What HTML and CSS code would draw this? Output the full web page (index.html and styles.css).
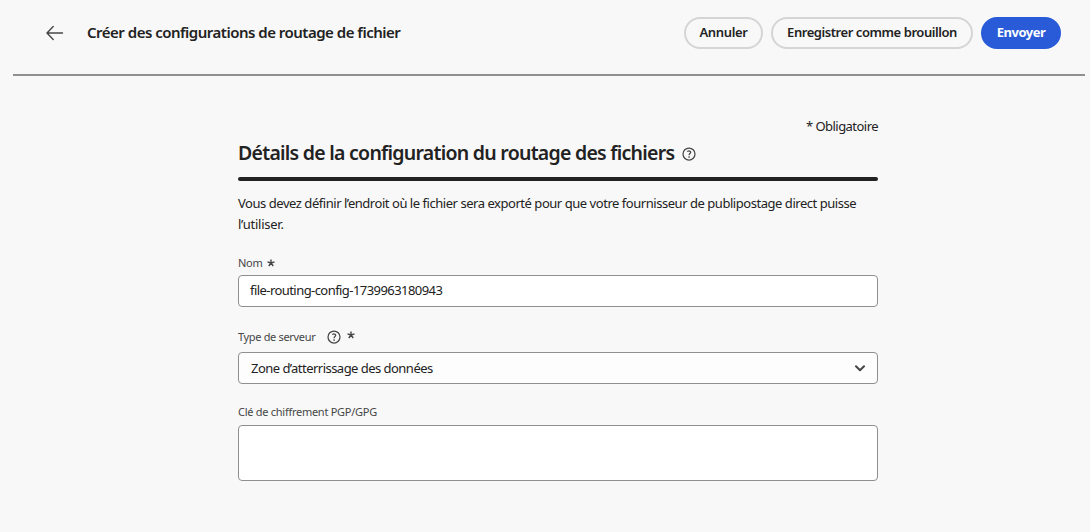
FILE: index.html
```html
<!DOCTYPE html>
<html lang="fr">
<head>
<meta charset="utf-8">
<title>Créer des configurations de routage de fichier</title>
<link rel="stylesheet" href="styles.css">
</head>
<body>
<header class="topbar">
  <svg class="back" width="18" height="16" viewBox="0 0 18 16"><path d="M16.5 8H1M7.2 1.5L1 8L7.2 14.5" /></svg>
  <h1 class="title"><span>Créer des configurations de routage de fichier</span></h1>
  <div class="actions">
    <button class="btn btn-cancel"><span>Annuler</span></button>
    <button class="btn btn-draft"><span>Enregistrer comme brouillon</span></button>
    <button class="btn btn-send"><span>Envoyer</span></button>
  </div>
</header>
<main class="form">
  <div class="required"><span>* Obligatoire</span></div>
  <div class="heading">
    <h2><span>Détails de la configuration du routage des fichiers</span></h2>
    <svg class="help" width="14" height="14" viewBox="0 0 14 14"><circle cx="7" cy="7" r="6"/><path d="M5.3 4.6C6.3 3.7 8.7 3.7 8.7 5.3C8.7 6.5 7.1 6.7 7.1 8.2"/><circle class="dot" cx="7.1" cy="10" r=".85"/></svg>
  </div>
  <div class="rule"></div>
  <p class="intro"><span>Vous devez définir l’endroit où le fichier sera exporté pour que votre fournisseur de publipostage direct puisse</span><br><span class="intro-end">l’utiliser.</span></p>
  <div class="label label-name"><span>Nom</span>
    <svg class="star" width="8" height="8" viewBox="0 0 8 8"><path d="M4 4V.4M4 4L7.5 2.9M4 4L6.2 7M4 4L1.8 7M4 4L.5 2.9"/></svg>
  </div>
  <div class="field field-name"><span>file-routing-config-1739963180943</span></div>
  <div class="label label-type"><span>Type de serveur</span>
    <svg class="help" width="14" height="14" viewBox="0 0 14 14"><circle cx="7" cy="7" r="6"/><path d="M5.3 4.6C6.3 3.7 8.7 3.7 8.7 5.3C8.7 6.5 7.1 6.7 7.1 8.2"/><circle class="dot" cx="7.1" cy="10" r=".85"/></svg>
    <svg class="star" width="8" height="8" viewBox="0 0 8 8"><path d="M4 4V.4M4 4L7.5 2.9M4 4L6.2 7M4 4L1.8 7M4 4L.5 2.9"/></svg>
  </div>
  <div class="field field-type"><span>Zone d’atterrissage des données</span>
    <svg class="chevron" width="10" height="7" viewBox="0 0 10 7"><path d="M1 1.2L5 5.2L9 1.2"/></svg>
  </div>
  <div class="label label-key"><span>Clé de chiffrement PGP/GPG</span></div>
  <div class="field field-key"></div>
</main>
</body>
</html>
```
FILE: styles.css
```css
* { box-sizing: border-box; }
body { margin: 0; height: 532px; overflow: hidden; background: #f8f8f8; color: #222; font-family: "Noto Sans", sans-serif; font-size: 13px; }
h1, h2, p { margin: 0; white-space: nowrap; }
svg { flex: none; fill: none; stroke: #464646; }
.topbar { display: flex; align-items: center; height: 76px; margin: 0 5px 0 13px; padding: 0 24px 8px 33px; border-bottom: 2px solid #909090; }
.back { stroke-width: 1.4; stroke-linecap: round; }
.title { margin: 0 0 2px 23px; font-size: 15px; font-weight: 600; letter-spacing: -.5px; line-height: 20px; }
.actions { display: flex; gap: 8px; margin-left: auto; }
.btn { height: 32px; padding: 0 0 2px; border: 2px solid #d5d5d5; border-radius: 16px; background: transparent; color: #222; font: 600 13px/20px "Noto Sans", sans-serif; white-space: nowrap; }
.btn-cancel { width: 79px; letter-spacing: -.35px; }
.btn-draft { width: 202px; letter-spacing: -.44px; }
.btn-send { width: 80px; border-color: #295bd9; background: #295bd9; color: #fff; font-weight: 700; letter-spacing: -.5px; }
.form { width: 640px; margin: 40px 0 0 238px; }
.required { height: 20px; line-height: 20px; text-align: right; letter-spacing: -.54px; }
.heading { display: flex; align-items: center; gap: 8px; height: 36px; padding-bottom: 1px; }
h2 { width: 436px; margin-bottom: 2px; font-size: 19.5px; font-weight: 600; letter-spacing: -.74px; line-height: 28px; }
.help { stroke-width: 1.25; }
.dot { fill: #464646; stroke: none; }
.rule { height: 4px; margin-top: 5px; border-radius: 2px; background: #222; }
.intro { margin-top: 12px; line-height: 21px; letter-spacing: -.46px; }
.intro-end { letter-spacing: -.25px; }
.label { display: flex; align-items: center; height: 16px; color: #464646; font-size: 11px; line-height: 16px; }
.label-name { margin-top: 20px; gap: 5px; letter-spacing: -.3px; }
.label-type { margin-top: 22px; letter-spacing: -.33px; }
.label-type .help { margin-left: 12px; }
.label-type .star { margin: -4px 0 0 6px; }
.label-key { margin-top: 20px; letter-spacing: -.27px; }
.star { stroke-width: 1.4; }
.field { display: flex; align-items: center; height: 32px; padding: 0 11px; border: 1px solid #8f8f8f; border-radius: 4px; background: #fff; }
.field-name { margin-top: 4px; padding-bottom: 2px; letter-spacing: -.56px; }
.field-type { margin-top: 7px; padding: 0 12px; background: #fdfdfd; letter-spacing: -.53px; }
.field-key { height: 56px; margin-top: 5px; }
.chevron { margin-left: auto; stroke-width: 2; stroke-linecap: round; stroke-linejoin: round; }
```
